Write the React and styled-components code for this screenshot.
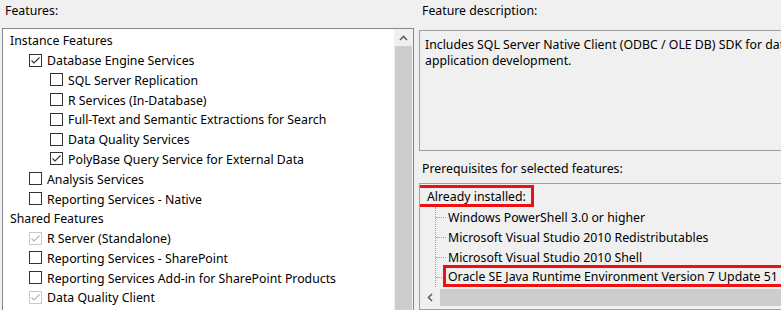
import React from "react"
import styled, { createGlobalStyle } from "styled-components"

const GlobalStyle = createGlobalStyle`
  html, body {
    margin: 0;
    background: #f0f0f0;
    overflow: hidden;
  }
  body {
    font-family: "Noto Sans", "Segoe UI", sans-serif;
    font-size: 12.3px;
    color: #000;
  }
`

const features = [
  { level: 0, label: "Instance Features" },
  { level: 1, label: "Database Engine Services", state: "checked" },
  { level: 2, label: "SQL Server Replication" },
  { level: 2, label: "R Services (In-Database)" },
  { level: 2, label: "Full-Text and Semantic Extractions for Search" },
  { level: 2, label: "Data Quality Services" },
  { level: 2, label: "PolyBase Query Service for External Data", state: "checked" },
  { level: 1, label: "Analysis Services" },
  { level: 1, label: "Reporting Services - Native" },
  { level: 0, label: "Shared Features" },
  { level: 1, label: "R Server (Standalone)", state: "disabled" },
  { level: 1, label: "Reporting Services - SharePoint" },
  { level: 1, label: "Reporting Services Add-in for SharePoint Products" },
  { level: 1, label: "Data Quality Client", state: "disabled" },
  { level: 1, label: "Client Tools Connectivity", state: "disabled" },
]

const installed = [
  { label: "Windows PowerShell 3.0 or higher" },
  { label: "Microsoft Visual Studio 2010 Redistributables" },
  { label: "Microsoft Visual Studio 2010 Shell" },
  { label: "Oracle SE Java Runtime Environment Version 7 Update 51", marked: true },
  { label: "Microsoft .NET Framework 4.6" },
]

const Check = ({ state }) => (
  <Box $state={state}>
    {state && (
      <svg width="11" height="11" viewBox="0 0 11 11">
        <path
          d="M1.5 5.5 L4 8 L9.5 2.5"
          fill="none"
          stroke={state === "disabled" ? "#b4b4b4" : "#333"}
          strokeWidth="1.1"
        />
      </svg>
    )}
  </Box>
)

const App = () => (
  <>
    <GlobalStyle />
    <Page>
      <Column>
        <Caption>Features:</Caption>
        <TreePanel>
          <List>
            {features.map((f) => (
              <Row key={f.label} $level={f.level}>
                {f.level > 0 && <Check state={f.state} />}
                <span>{f.label}</span>
              </Row>
            ))}
          </List>
          <VScroll>
            <ArrowButton>
              <svg width="9" height="6" viewBox="0 0 9 6">
                <path d="M1 5 L4.5 1.5 L8 5" fill="none" stroke="#606060" strokeWidth="1.6" />
              </svg>
            </ArrowButton>
            <VThumb />
          </VScroll>
        </TreePanel>
      </Column>
      <Column>
        <Caption>Feature description:</Caption>
        <Description>
          Includes SQL Server Native Client (ODBC / OLE DB) SDK for database
          application development.
        </Description>
        <SubCaption>Prerequisites for selected features:</SubCaption>
        <Prereqs>
          <PrereqTree>
            <RootRow>
              <Marked $root>Already installed:</Marked>
            </RootRow>
            <Children>
              {installed.map((item) => (
                <Leaf key={item.label}>
                  {item.marked ? <Marked>{item.label}</Marked> : <span>{item.label}</span>}
                </Leaf>
              ))}
            </Children>
          </PrereqTree>
          <HScroll>
            <ArrowButton $wide>
              <svg width="6" height="9" viewBox="0 0 6 9">
                <path d="M5 1 L1.5 4.5 L5 8" fill="none" stroke="#606060" strokeWidth="1.6" />
              </svg>
            </ArrowButton>
            <HThumb />
          </HScroll>
        </Prereqs>
      </Column>
    </Page>
  </>
)

export default App

const Page = styled.div`
  display: grid;
  grid-template-columns: 412px 440px;
  column-gap: 5px;
  padding-left: 2px;
  width: 781px;
  height: 310px;
  overflow: hidden;
`

const Column = styled.div`
  display: flex;
  flex-direction: column;
  min-height: 0;
`

const Caption = styled.div`
  height: 28px;
  padding: 2px 0 0 3px;
  line-height: 17px;
  box-sizing: border-box;
  flex: none;
`

const TreePanel = styled.div`
  flex: 1;
  display: flex;
  background: #fff;
  border: 1px solid #828790;
  border-bottom: none;
  min-height: 0;
  overflow: hidden;
`

const List = styled.div`
  flex: 1;
  display: flex;
  flex-direction: column;
  padding-top: 2px;
`

const Row = styled.div`
  display: flex;
  align-items: center;
  gap: 5px;
  height: 19.77px;
  flex: none;
  padding-left: ${(p) => (p.$level === 0 ? 7 : p.$level === 1 ? 26 : 47)}px;
  white-space: nowrap;
`

const Box = styled.span`
  width: 11px;
  height: 11px;
  flex: none;
  margin-top: -1px;
  border: 1px solid ${(p) => (p.$state === "disabled" ? "#c8c8c8" : "#333")};
  background: #fff;
  display: flex;
  align-items: center;
  justify-content: center;
`

const VScroll = styled.div`
  width: 19px;
  flex: none;
  display: flex;
  flex-direction: column;
  background: #f0f0f0;
  padding: 0 1px;
  box-sizing: border-box;
`

const ArrowButton = styled.div`
  flex: none;
  display: flex;
  align-items: center;
  justify-content: center;
  width: ${(p) => (p.$wide ? "20px" : "auto")};
  height: ${(p) => (p.$wide ? "auto" : "17px")};
`

const VThumb = styled.div`
  flex: 1;
  background: #cdcdcd;
`

const Description = styled.div`
  flex: none;
  margin-top: 2px;
  height: 111px;
  border: 1px solid #a0a0a0;
  border-right: none;
  padding: 6px 5px 2px;
  box-sizing: content-box;
  line-height: 16px;
  width: 430px;
  overflow: hidden;
`

const SubCaption = styled.div`
  flex: none;
  height: 32px;
  padding: 3px 0 0 3px;
  box-sizing: border-box;
  display: flex;
  align-items: center;
`

const Prereqs = styled.div`
  flex: 1;
  display: flex;
  flex-direction: column;
  border: 1px solid #a0a0a0;
  border-right: none;
  min-height: 0;
`

const PrereqTree = styled.div`
  flex: 1;
  min-height: 0;
  overflow: hidden;
  white-space: nowrap;
  padding-top: 3px;
`

const RootRow = styled.div`
  height: 20px;
  display: flex;
  align-items: center;
  margin-left: -5px;
`

const Marked = styled.span`
  display: inline-flex;
  align-items: center;
  height: 22px;
  box-sizing: border-box;
  border: 3px solid #ee1111;
  padding: ${(p) => (p.$root ? "1px 5px 0 9px" : "1px 3px 0 2px")};
  margin: ${(p) => (p.$root ? "-2px 0 0 0" : "-2px 0 0 -5px")};
`

const Children = styled.div`
  margin-left: 15px;
  border-left: 1px dotted #a0a0a0;
`

const Leaf = styled.div`
  height: 20px;
  display: flex;
  align-items: center;
  &::before {
    content: "";
    width: 10px;
    flex: none;
    border-top: 1px dotted #a0a0a0;
    margin-right: 2px;
  }
`

const HScroll = styled.div`
  flex: none;
  height: 17px;
  display: flex;
  padding: 1px 0;
  margin-bottom: 2px;
`

const HThumb = styled.div`
  flex: 1;
  background: #cdcdcd;
`
